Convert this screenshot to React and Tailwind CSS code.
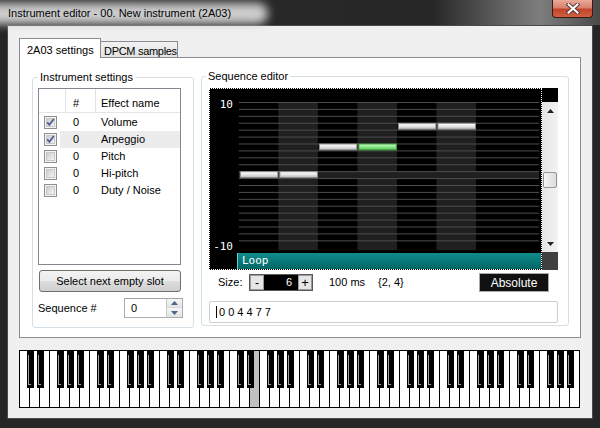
import React from "react";

const effects = [
  { name: "Volume", on: true },
  { name: "Arpeggio", on: true, hot: true },
  { name: "Pitch" },
  { name: "Hi-pitch" },
  { name: "Duty / Noise" },
];

// arpeggio sequence shown in the graph
const seq = [0, 0, 4, 4, 7, 7];
const selected = 3;

function CloseButton() {
  return (
    <div className="ml-auto mr-[7px] flex h-[18px] w-[41px] items-center justify-center rounded-b-[4px] border border-t-0 border-[#3b1a15] bg-[linear-gradient(180deg,#eaa99a_0%,#d9826f_45%,#c2432d_55%,#d0613f_100%)]">
      <svg width="14" height="11" viewBox="0 0 14 11">
        <path d="M2.5 1.5 L11.5 9.5 M11.5 1.5 L2.5 9.5" stroke="#5a3a36" strokeWidth="4" strokeLinecap="square" />
        <path d="M2.5 1.5 L11.5 9.5 M11.5 1.5 L2.5 9.5" stroke="#ffffff" strokeWidth="2" strokeLinecap="square" />
      </svg>
    </div>
  );
}

function TitleBar() {
  return (
    <div className="relative flex h-[25px] shrink-0 items-start bg-[linear-gradient(90deg,#2c2c2c_0%,#262626_72%,#6c6c6c_86%,#7d7d7d_90%,#4a4a4a_100%)]">
      <div className="absolute left-[-24px] top-[3px] h-[21px] w-[292px] rounded-full bg-[#cdcdcd] blur-[5px]" />
      <span className="relative whitespace-nowrap pl-[8px] text-[11px] leading-[27px] text-black">
        Instrument editor - 00. New instrument (2A03)
      </span>
      <CloseButton />
    </div>
  );
}

function Check({ on }) {
  return (
    <svg width="13" height="13" viewBox="0 0 13 13">
      <defs>
        <linearGradient id="cbfill" x1="0" y1="0" x2="1" y2="1">
          <stop offset="0" stopColor="#cbcbcb" />
          <stop offset="1" stopColor="#f6f6f6" />
        </linearGradient>
      </defs>
      <rect x="0.5" y="0.5" width="12" height="12" fill="#f4f4f4" stroke="#8e8f8f" />
      <rect x="2.5" y="2.5" width="8" height="8" fill="url(#cbfill)" stroke="#c8c8c8" />
      {on && <path d="M3.2 6.4 L5.4 8.8 L9.8 3" fill="none" stroke="#4c5f96" strokeWidth="1.8" />}
    </svg>
  );
}

function GroupBox({ label, className, labelLeft, children }) {
  return (
    <div className={`relative rounded-[3px] border border-[#d5dfe5] ${className}`}>
      <span className={`absolute -top-[7px] ${labelLeft} whitespace-nowrap bg-white px-[2px] text-[11px] leading-[13px]`}>{label}</span>
      {children}
    </div>
  );
}

function EffectList() {
  return (
    <div className="h-[177px] w-[143px] border border-[#828790] bg-white">
      <div className="flex h-[24px] border-b border-[#e5e5e5] text-[11px]">
        <div className="w-[26px]" />
        <div className="w-[30px] border-l border-[#e3e3e3] pl-[7px] pt-[6px]">#</div>
        <div className="flex-1 border-l border-[#e3e3e3] pl-[5px] pt-[6px]">Effect name</div>
      </div>
      <div className="pt-[1px]">
        {effects.map((e) => (
          <div key={e.name} className="flex h-[17px] items-center text-[11px]">
            <div className="flex w-[21px] pl-[5px]">
              <Check on={e.on} />
            </div>
            <div className={`flex h-full flex-1 items-center ${e.hot ? "bg-[#ececec]" : ""}`}>
              <span className="w-[41px] pl-[13px]">0</span>
              <span>{e.name}</span>
            </div>
          </div>
        ))}
      </div>
    </div>
  );
}

function Spinner() {
  return (
    <div className="flex w-[16px] flex-col border-l border-[#c9c9c9]">
      <div className="flex h-[9px] items-center justify-center border-b border-[#d7d7d7] bg-[linear-gradient(180deg,#f5f5f5,#e4e4e4)]">
        <svg width="7" height="4" viewBox="0 0 7 4"><path d="M0 4 L3.5 0 L7 4 Z" fill="#4d6389" /></svg>
      </div>
      <div className="flex flex-1 items-center justify-center bg-[linear-gradient(180deg,#f5f5f5,#e4e4e4)]">
        <svg width="7" height="4" viewBox="0 0 7 4"><path d="M0 0 L3.5 4 L7 0 Z" fill="#4d6389" /></svg>
      </div>
    </div>
  );
}

function InstrumentSettings() {
  return (
    <GroupBox label="Instrument settings" labelLeft="left-[5px]" className="mt-[19px] h-[251px] w-[162px] pl-[5px] pt-[10px]">
      <EffectList />
      <button className="ml-[1px] mt-[5px] h-[22px] w-[142px] rounded-[3px] border border-[#707070] bg-[linear-gradient(180deg,#f3f3f3_0%,#ebebeb_48%,#dddddd_52%,#cfcfcf_100%)] text-[11px] leading-[18px]">
        Select next empty slot
      </button>
      <div className="mt-[6px] flex h-[20px] items-center text-[11px]">
        <span className="w-[86px]">Sequence #</span>
        <div className="flex h-[20px] w-[59px] border border-[#abadb3] border-t-[#a0a3aa] bg-white">
          <span className="flex-1 pl-[6px] leading-[18px]">0</span>
          <Spinner />
        </div>
      </div>
    </GroupBox>
  );
}

function GraphSvg() {
  const rows = Array.from({ length: 21 }, (_, k) => k);
  return (
    <svg width="304" height="151" viewBox="0 0 304 151" className="block">
      <defs>
        <linearGradient id="barw" x1="0" y1="0" x2="0" y2="1">
          <stop offset="0" stopColor="#ffffff" />
          <stop offset="0.5" stopColor="#e6e6e6" />
          <stop offset="1" stopColor="#b8b8b8" />
        </linearGradient>
        <linearGradient id="barg" x1="0" y1="0" x2="0" y2="1">
          <stop offset="0" stopColor="#c8f8c0" />
          <stop offset="0.5" stopColor="#8ee88a" />
          <stop offset="1" stopColor="#4cc14c" />
        </linearGradient>
      </defs>
      <rect x="0" y="0" width="304" height="151" fill="#000" />
      {[1, 3, 5].map((c) => (
        <rect key={c} x={c * 40} y="0" width="40" height="150" fill="#202020" />
      ))}
      <rect x="0" y="70" width="304" height="7" fill="#202020" />
      {rows.map((k) => (
        <line key={k} x1="0" x2="304" y1={k * 7 + 0.5} y2={k * 7 + 0.5} stroke="#4e4e4e" />
      ))}
      {seq.map((v, i) => (
        <rect
          key={i}
          x={i * 40 + 1.5}
          y={(10 - v) * 7 + 0.5}
          width="38"
          height="6"
          fill={i === selected ? "url(#barg)" : "url(#barw)"}
          stroke={i === selected ? "#3f9f3f" : "#8c8c8c"}
        />
      ))}
    </svg>
  );
}

function ScrollBar() {
  return (
    <div className="flex w-[16px] flex-col">
      <div className="h-[14px] bg-black" />
      <div className="flex h-[150px] flex-col bg-[linear-gradient(90deg,#e4e4e4,#f3f3f3)]">
        <div className="flex h-[17px] items-center justify-center">
          <svg width="7" height="4" viewBox="0 0 7 4"><path d="M0 4 L3.5 0 L7 4 Z" fill="#222" /></svg>
        </div>
        <div className="h-[53px]" />
        <div className="mx-[1px] h-[16px] rounded-[2px] border border-[#979797] bg-[linear-gradient(90deg,#f6f6f6,#dcdcdc)]" />
        <div className="flex-1" />
        <div className="flex h-[17px] items-center justify-center">
          <svg width="7" height="4" viewBox="0 0 7 4"><path d="M0 0 L3.5 4 L7 0 Z" fill="#222" /></svg>
        </div>
      </div>
      <div className="flex-1 bg-[#404040]" />
    </div>
  );
}

function Graph() {
  return (
    <div className="flex h-[182px] w-[349px] bg-black">
      <div className="flex h-full w-[333px] border border-dotted border-white">
        <div className="flex w-[27px] flex-col justify-between pb-[16px] pr-[4px] pt-[9px] text-right font-[family-name:DejaVu_Sans_Mono,monospace] text-[11px] leading-[13px] text-white">
          <span>10</span>
          <span>-10</span>
        </div>
        <div className="flex w-[304px] flex-col">
          <div className="h-[13px]" />
          <GraphSvg />
          <div className="h-[2px]" />
          <div className="flex h-[16px] items-center border-l border-[#5fd0d0] bg-[linear-gradient(180deg,#118c8c,#006565)] pl-[4px] font-[family-name:DejaVu_Sans_Mono,monospace] text-[11px] text-white">
            Loop
          </div>
        </div>
      </div>
      <ScrollBar />
    </div>
  );
}

function SequenceEditor() {
  return (
    <GroupBox label="Sequence editor" labelLeft="left-[4px]" className="ml-[7px] mt-[18px] h-[250px] w-[368px] pl-[7px] pt-[11px]">
      <Graph />
      <div className="mt-[3px] flex h-[19px] w-[349px] items-center text-[11px]">
        <span className="ml-[9px] w-[31px]">Size:</span>
        <div className="flex h-[17px] w-[64px] items-center border border-[#5a5a5a] bg-black">
          <div className="flex h-[15px] w-[14px] items-center justify-center border border-[#9a9a9a] bg-[#e6e6e6] text-[12px] leading-none">-</div>
          <span className="flex-1 pr-[6px] text-right text-white">6</span>
          <div className="flex h-[15px] w-[14px] items-center justify-center border border-[#9a9a9a] bg-[#e6e6e6] text-[13px] leading-none">+</div>
        </div>
        <span className="ml-[16px] w-[49px]">100 ms</span>
        <span>{"{2, 4}"}</span>
        <div className="ml-auto mr-[9px] flex h-[19px] w-[70px] items-center justify-center border border-[#a9a9a9] bg-[#111] text-[12px] text-white">
          Absolute
        </div>
      </div>
      <div className="mt-[9px] flex h-[22px] w-[349px] items-center rounded-[2px] border border-[#cdcdcd] bg-white text-[11px]">
        <div className="ml-[6px] h-[12px] w-[1px] bg-black" />
        <span className="ml-[2px]">0 0 4 4 7 7</span>
      </div>
    </GroupBox>
  );
}

function Piano() {
  const whites = Array.from({ length: 56 }, (_, i) => i);
  const blacks = [];
  for (let o = 0; o < 8; o++) for (const k of [0, 1, 3, 4, 5]) blacks.push(o * 7 + k);
  return (
    <div className="relative mt-[12px] flex h-[58px] w-[561px] border-y border-l border-black bg-white">
      {whites.map((i) => (
        <div key={i} className={`h-full w-[10px] border-r border-black ${i === 23 ? "bg-[#c0c0c0]" : "bg-white"}`} />
      ))}
      {blacks.map((k) => (
        <div key={k} className="absolute top-0 h-[37px] w-[7px] bg-black" style={{ left: k * 10 + 7 }}>
          <div className="absolute bottom-[3px] left-[1px] top-[4px] w-[3px] border-b border-l border-[#a0a0a0]" />
        </div>
      ))}
    </div>
  );
}

export default function App() {
  return (
    <div className="flex h-[428px] w-[600px] flex-col overflow-hidden bg-[#262626] font-[family-name:Liberation_Sans,Arial,sans-serif] text-black">
      <TitleBar />
      <div className="ml-[7px] h-[394px] w-[586px] border border-[#4a4a4a] bg-[#f0f0f0] pl-[11px] pt-[12px]">
        {/* Tabs */}
        <div className="relative z-10 flex h-[19px] items-end text-[11px]">
          <div className="-mb-[1px] h-[20px] w-[82px] whitespace-nowrap border border-b-0 border-[#898c95] bg-white pl-[7px] pt-[3px]">
            2A03 settings
          </div>
          <div className="h-[16px] w-[77px] whitespace-nowrap border border-b-0 border-l-0 border-[#898c95] bg-[linear-gradient(180deg,#f2f2f2,#e3e3e3)] pl-[3px] pt-[1px] tracking-[-0.3px]">
            DPCM samples
          </div>
        </div>
        <div className="flex h-[281px] w-[562px] items-start border border-[#898c95] bg-white pl-[12px]">
          <InstrumentSettings />
          <SequenceEditor />
        </div>
        <Piano />
      </div>
    </div>
  );
}
